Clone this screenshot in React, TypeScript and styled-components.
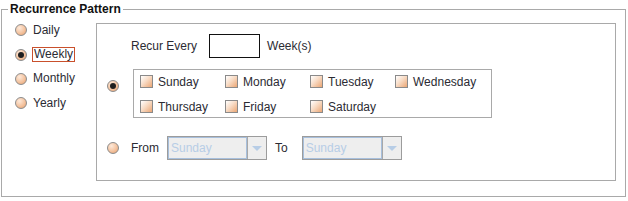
import React from "react";
import styled, { createGlobalStyle } from "styled-components";

// ______________________________________________________
// 定数

const PATTERNS = ["Daily", "Weekly", "Monthly", "Yearly"];
const DAYS = ["Sunday", "Monday", "Tuesday", "Wednesday", "Thursday", "Friday", "Saturday"];

const TEXT = "#2b2b33";
const LINE = "#a9a9a9";

const GlobalStyle = createGlobalStyle`
  html, body {
    margin: 0;
    padding: 0;
    background: #fff;
  }
  body {
    font-family: "Liberation Sans", Arial, sans-serif;
    font-size: 12px;
    color: ${TEXT};
  }
`;

// ______________________________________________________
// 部品

const Frame = styled.fieldset`
  box-sizing: border-box;
  width: 625px;
  margin: 2px 2px 4px 1px;
  padding: 0;
  border: 1px solid ${LINE};
  min-inline-size: 0;
`;

const Legend = styled.legend`
  margin-left: 6px;
  padding: 0 2px;
  font-weight: bold;
  font-size: 12px;
  line-height: 15px;
  color: #111;
`;

const Body = styled.div`
  display: flex;
  padding: 0 9px 15px 0;
`;

const PatternList = styled.div`
  width: 94px;
  flex: none;
  display: flex;
  flex-direction: column;
  padding-top: 1px;
`;

const PatternRow = styled.div`
  display: flex;
  align-items: center;
  height: 24.4px;
  padding-left: 13px;
`;

const Radio = styled.span<{ $checked?: boolean }>`
  position: relative;
  box-sizing: border-box;
  width: 12px;
  height: 12px;
  flex: none;
  border-radius: 50%;
  border: 1px solid #8c8c8c;
  background: radial-gradient(circle at 35% 30%, #fde9da 0%, #f4c39f 55%, #e39d6c 100%);
  &::after {
    content: "";
    display: ${(p) => (p.$checked ? "block" : "none")};
    position: absolute;
    left: 2px;
    top: 2px;
    width: 6px;
    height: 6px;
    border-radius: 50%;
    background: #1f1f1f;
  }
`;

const Label = styled.span<{ $focused?: boolean }>`
  margin-left: ${(p) => (p.$focused ? "5px" : "6px")};
  line-height: 13px;
  padding: 0 ${(p) => (p.$focused ? "1px" : "0")};
  border: ${(p) => (p.$focused ? "1px solid #c9502c" : "none")};
`;

const Panel = styled.div`
  flex: 1;
  box-sizing: border-box;
  height: 158px;
  margin-top: 6px;
  border: 1px solid ${LINE};
  padding: 10px 0 0 0;
  display: flex;
  flex-direction: column;
`;

const Row = styled.div<{ $top?: number }>`
  display: flex;
  align-items: center;
  margin-top: ${(p) => p.$top ?? 0}px;
`;

const RadioCell = styled.div<{ $alignTop?: boolean }>`
  width: 34px;
  flex: none;
  display: flex;
  align-self: ${(p) => (p.$alignTop ? "flex-start" : "center")};
  padding-top: ${(p) => (p.$alignTop ? "11px" : "0")};
  padding-left: 10px;
  box-sizing: border-box;
`;

const Text = styled.span<{ $left?: number; $gap?: number }>`
  margin-left: ${(p) => p.$left ?? 0}px;
  margin-right: ${(p) => p.$gap ?? 0}px;
  white-space: nowrap;
`;

const NumberField = styled.div`
  box-sizing: border-box;
  width: 51px;
  height: 24px;
  border: 1px solid #111;
  background: #fff;
  margin-right: 7px;
`;

const DayBox = styled.div`
  box-sizing: border-box;
  width: 359px;
  height: 49px;
  margin-left: 2px;
  border: 1px solid ${LINE};
  padding: 5px 0 0 6px;
  display: grid;
  grid-template-columns: repeat(4, 85px);
  grid-auto-rows: 13px;
  row-gap: 12px;
`;

const Day = styled.div`
  display: flex;
  align-items: center;
  height: 13px;
`;

const CheckBox = styled.span`
  box-sizing: border-box;
  width: 13px;
  height: 13px;
  flex: none;
  border: 1px solid #8a8a8a;
  background: linear-gradient(135deg, #ffffff 0%, #f8dcc6 45%, #eba674 100%);
  margin-right: 5px;
`;

const Combo = styled.div`
  box-sizing: border-box;
  display: flex;
  width: 100px;
  height: 24px;
  border: 1px solid #9c9c9c;
  background: #eeeeee;
`;

const ComboField = styled.div`
  flex: 1;
  box-sizing: border-box;
  border: 1px solid #a7bfdc;
  padding-left: 2px;
  display: flex;
  align-items: center;
  color: #b7cde6;
`;

const ComboArrow = styled.div`
  width: 19px;
  flex: none;
  box-sizing: border-box;
  border-left: 1px solid #a8a8a8;
  display: flex;
  align-items: center;
  justify-content: center;
  &::before {
    content: "";
    width: 0;
    height: 0;
    border-left: 5px solid transparent;
    border-right: 5px solid transparent;
    border-top: 5px solid #b7cde6;
  }
`;

// ______________________________________________________
// コンポーネント

const DayCombo: React.FC<{ value: string }> = ({ value }) => (
  <Combo>
    <ComboField>{value}</ComboField>
    <ComboArrow />
  </Combo>
);

const App: React.FC = () => {
  return (
    <>
      <GlobalStyle />
      <Frame>
        <Legend>Recurrence Pattern</Legend>
        <Body>
          <PatternList>
            {PATTERNS.map((p) => (
              <PatternRow key={p}>
                <Radio $checked={p === "Weekly"} />
                <Label $focused={p === "Weekly"}>{p}</Label>
              </PatternRow>
            ))}
          </PatternList>
          <Panel>
            <Row>
              <RadioCell />
              <Text $gap={12}>Recur Every</Text>
              <NumberField />
              <Text>Week(s)</Text>
            </Row>
            <Row $top={11}>
              <RadioCell $alignTop>
                <Radio $checked />
              </RadioCell>
              <DayBox>
                {DAYS.map((d) => (
                  <Day key={d}>
                    <CheckBox />
                    <span>{d}</span>
                  </Day>
                ))}
              </DayBox>
            </Row>
            <Row $top={18}>
              <RadioCell>
                <Radio />
              </RadioCell>
              <Text $gap={8}>From</Text>
              <DayCombo value="Sunday" />
              <Text $left={8} $gap={14}>
                To
              </Text>
              <DayCombo value="Sunday" />
            </Row>
          </Panel>
        </Body>
      </Frame>
    </>
  );
};

export default App;
